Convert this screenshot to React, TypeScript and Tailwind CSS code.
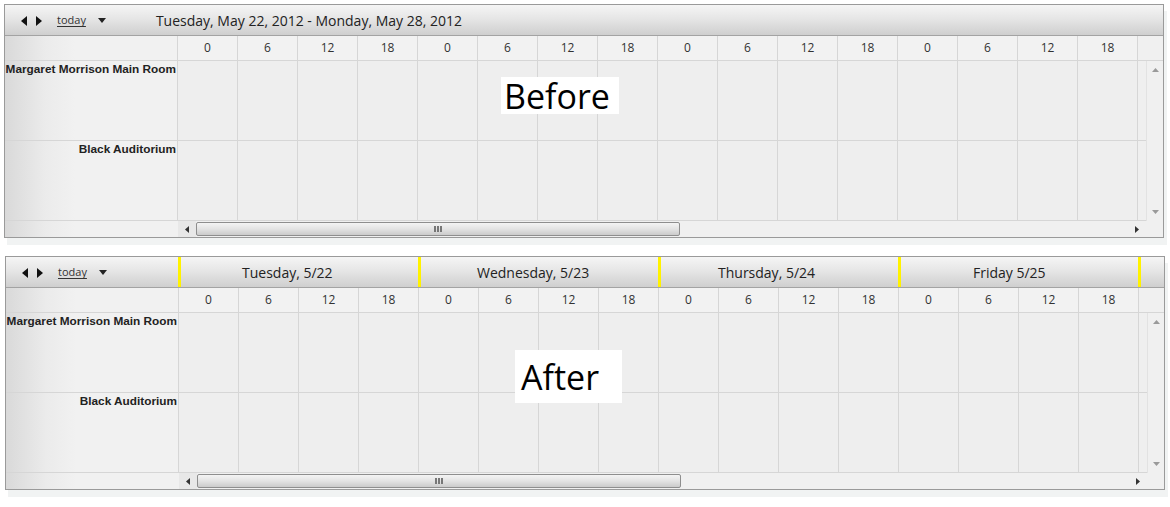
import React from "react";

const hours = [0, 6, 12, 18];
const days = [
  { label: "Tuesday, 5/22", pad: "pl-[61px]" },
  { label: "Wednesday, 5/23", pad: "pl-[56px]" },
  { label: "Thursday, 5/24", pad: "pl-[57px]" },
  { label: "Friday 5/25", pad: "pl-[72px]" },
];
const rooms = ["Margaret Morrison Main Room", "Black Auditorium"];

const labelBg = "bg-[linear-gradient(to_right,#d9d9d9_0px,#ebebeb_40px,#f1f1f1_70px,#f1f1f1_100%)]";
const headerBg = "bg-[linear-gradient(to_bottom,#f5f5f5_0%,#e6e6e6_45%,#cfcfcf_100%)]";

function NavControls() {
  return (
    <div className="flex items-center pl-[15px] pt-[1px]">
      <svg width="8" height="10" viewBox="0 0 8 10" className="mr-[7px]">
        <path d="M7 0 L1 5 L7 10 Z" fill="#111" />
      </svg>
      <svg width="8" height="10" viewBox="0 0 8 10">
        <path d="M1 0 L7 5 L1 10 Z" fill="#111" />
      </svg>
      <span className="ml-[14px] text-[11px] text-[#333] underline underline-offset-2">today</span>
      <svg width="8" height="5" viewBox="0 0 8 5" className="ml-[12px]">
        <path d="M0 0 L8 0 L4 5 Z" fill="#222" />
      </svg>
    </div>
  );
}

function Panel({ after }: { after: boolean }) {
  return (
    <div className="w-[1160px] border border-[#9a9a9a] bg-[#eeeeee] shadow-[3px_7px_0_0_#f1f3f3]">
      {/* header */}
      <div className={`flex h-[31px] border-b border-[#a3a3a3] ${headerBg}`}>
        {after ? (
          <>
            <div className="flex w-[172px] items-center">
              <NavControls />
            </div>
            {days.map((d) => (
              <div
                key={d.label}
                className={`flex w-[240px] items-center border-l-[3px] border-[#fff200] text-[14px] text-[#222] ${d.pad}`}
              >
                {d.label}
              </div>
            ))}
            <div className="w-[3px] bg-[#fff200]" />
          </>
        ) : (
          <div className="flex items-center">
            <NavControls />
            <span className="ml-[50px] text-[14px] text-[#222]">
              Tuesday, May 22, 2012 - Monday, May 28, 2012
            </span>
          </div>
        )}
      </div>

      {/* hour header row */}
      <div className="flex h-[25px] border-b border-[#d6d6d6]">
        <div className={`w-[173px] border-r border-[#d6d6d6] ${labelBg}`} />
        {Array.from({ length: 16 }).map((_, i) => (
          <div
            key={i}
            className="flex w-[60px] items-center justify-center border-r border-[#d6d6d6] bg-[#f2f2f2] text-[12px] text-[#333]"
          >
            {hours[i % 4]}
          </div>
        ))}
        <div className="w-[8px] bg-[#f0f0f0]" />
        <div className="w-[17px] bg-[#f0f0f0]" />
      </div>

      {/* body */}
      <div className="flex">
        <div className="flex flex-col">
          {rooms.map((r) => (
            <div key={r} className="flex h-[80px] border-b border-[#d6d6d6]">
              <div
                className={`w-[173px] whitespace-nowrap border-r border-[#d6d6d6] pr-[1px] text-right text-[11.8px] font-bold leading-[16px] text-[#222] ${labelBg}`}
                style={{ fontFamily: '"Liberation Sans", Arial, sans-serif' }}
              >
                {r}
              </div>
              {Array.from({ length: 16 }).map((_, i) => (
                <div key={i} className="w-[60px] border-r border-[#d6d6d6]" />
              ))}
              <div className="w-[8px] bg-[#efefef]" />
            </div>
          ))}
        </div>
        <div className="flex w-[17px] flex-col items-center justify-between border-l border-[#e2e2e2] bg-[#f0f0f0] py-[7px]">
          <svg width="7" height="4" viewBox="0 0 7 4">
            <path d="M0 4 L3.5 0 L7 4 Z" fill="#9a9a9a" />
          </svg>
          <svg width="7" height="4" viewBox="0 0 7 4">
            <path d="M0 0 L7 0 L3.5 4 Z" fill="#9a9a9a" />
          </svg>
        </div>
      </div>

      {/* horizontal scrollbar */}
      <div className="flex h-[16px]">
        <div className={`w-[173px] ${labelBg}`} />
        <div className="flex w-[968px] items-center bg-[#f0f0f0]">
          <div className="flex h-full w-[18px] items-center justify-center bg-[#e8e8e8]">
            <svg width="4" height="7" viewBox="0 0 4 7">
              <path d="M4 0 L0 3.5 L4 7 Z" fill="#333" />
            </svg>
          </div>
          <div className="flex h-[14px] w-[484px] items-center justify-center rounded-[2px] border border-[#8e8e8e] bg-[linear-gradient(to_bottom,#f4f4f4_0%,#e3e3e3_50%,#cbcbcb_100%)]">
            <div className="flex gap-[1px]">
              <div className="h-[6px] w-[2px] bg-[#777]" />
              <div className="h-[6px] w-[2px] bg-[#777]" />
              <div className="h-[6px] w-[2px] bg-[#777]" />
            </div>
          </div>
          <div className="flex-1" />
          <div className="flex h-full w-[18px] items-center justify-center">
            <svg width="4" height="7" viewBox="0 0 4 7">
              <path d="M0 0 L4 3.5 L0 7 Z" fill="#333" />
            </svg>
          </div>
        </div>
        <div className="w-[17px] bg-[#f0f0f0]" />
      </div>
    </div>
  );
}

export default function App() {
  return (
    <div
      className="relative h-[507px] w-[1170px] overflow-hidden bg-white"
      style={{ fontFamily: '"Open Sans", "Noto Sans", sans-serif' }}
    >
      <div className="ml-[4px] pt-[4px]">
        <Panel after={false} />
      </div>
      <div className="ml-[5px] mt-[18px]">
        <Panel after={true} />
      </div>

      <div className="absolute left-[501px] top-[77px] flex h-[37px] w-[118px] items-center bg-white pl-[3px] text-[34px] leading-none text-black">
        Before
      </div>
      <div className="absolute left-[515px] top-[350px] flex h-[53px] w-[107px] items-center bg-white pl-[6px] text-[34px] leading-none text-black">
        After
      </div>
    </div>
  );
}
